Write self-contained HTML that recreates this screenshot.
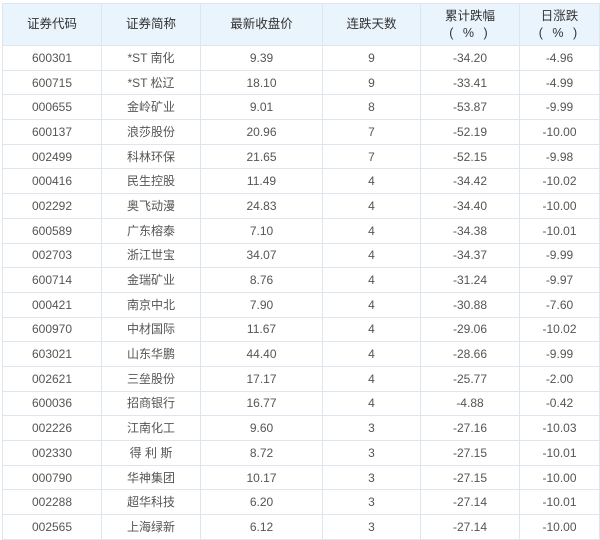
<!DOCTYPE html>
<html><head><meta charset="utf-8"><style>
body{margin:0;background:#fff;width:600px;height:540px;overflow:hidden}
table{position:absolute;left:2px;top:3px;border-collapse:collapse;table-layout:fixed;font-family:"Liberation Sans","Noto Sans CJK SC",sans-serif;font-size:12px;color:#555}
td,th{border:1px solid #dde6ee;text-align:center;padding:0;height:23.7px;line-height:14px}
th{background:#eaf4fc;color:#333;font-weight:normal;height:41px;font-size:12.5px;line-height:17px}
.p{letter-spacing:3px}
</style></head><body>
<table>
<colgroup><col style="width:99px"><col style="width:99px"><col style="width:122px"><col style="width:98px"><col style="width:99px"><col style="width:80px"></colgroup>
<tr><th>证券代码</th><th>证券简称</th><th>最新收盘价</th><th>连跌天数</th><th>累计跌幅<br><span class="p">( % )</span></th><th>日涨跌<br><span class="p">( % )</span></th></tr>
<tr><td>600301</td><td>*ST 南化</td><td>9.39</td><td>9</td><td>-34.20</td><td>-4.96</td></tr>
<tr><td>600715</td><td>*ST 松辽</td><td>18.10</td><td>9</td><td>-33.41</td><td>-4.99</td></tr>
<tr><td>000655</td><td>金岭矿业</td><td>9.01</td><td>8</td><td>-53.87</td><td>-9.99</td></tr>
<tr><td>600137</td><td>浪莎股份</td><td>20.96</td><td>7</td><td>-52.19</td><td>-10.00</td></tr>
<tr><td>002499</td><td>科林环保</td><td>21.65</td><td>7</td><td>-52.15</td><td>-9.98</td></tr>
<tr><td>000416</td><td>民生控股</td><td>11.49</td><td>4</td><td>-34.42</td><td>-10.02</td></tr>
<tr><td>002292</td><td>奥飞动漫</td><td>24.83</td><td>4</td><td>-34.40</td><td>-10.00</td></tr>
<tr><td>600589</td><td>广东榕泰</td><td>7.10</td><td>4</td><td>-34.38</td><td>-10.01</td></tr>
<tr><td>002703</td><td>浙江世宝</td><td>34.07</td><td>4</td><td>-34.37</td><td>-9.99</td></tr>
<tr><td>600714</td><td>金瑞矿业</td><td>8.76</td><td>4</td><td>-31.24</td><td>-9.97</td></tr>
<tr><td>000421</td><td>南京中北</td><td>7.90</td><td>4</td><td>-30.88</td><td>-7.60</td></tr>
<tr><td>600970</td><td>中材国际</td><td>11.67</td><td>4</td><td>-29.06</td><td>-10.02</td></tr>
<tr><td>603021</td><td>山东华鹏</td><td>44.40</td><td>4</td><td>-28.66</td><td>-9.99</td></tr>
<tr><td>002621</td><td>三垒股份</td><td>17.17</td><td>4</td><td>-25.77</td><td>-2.00</td></tr>
<tr><td>600036</td><td>招商银行</td><td>16.77</td><td>4</td><td>-4.88</td><td>-0.42</td></tr>
<tr><td>002226</td><td>江南化工</td><td>9.60</td><td>3</td><td>-27.16</td><td>-10.03</td></tr>
<tr><td>002330</td><td>得 利 斯</td><td>8.72</td><td>3</td><td>-27.15</td><td>-10.01</td></tr>
<tr><td>000790</td><td>华神集团</td><td>10.17</td><td>3</td><td>-27.15</td><td>-10.00</td></tr>
<tr><td>002288</td><td>超华科技</td><td>6.20</td><td>3</td><td>-27.14</td><td>-10.01</td></tr>
<tr><td>002565</td><td>上海绿新</td><td>6.12</td><td>3</td><td>-27.14</td><td>-10.00</td></tr>
</table>
</body></html>
